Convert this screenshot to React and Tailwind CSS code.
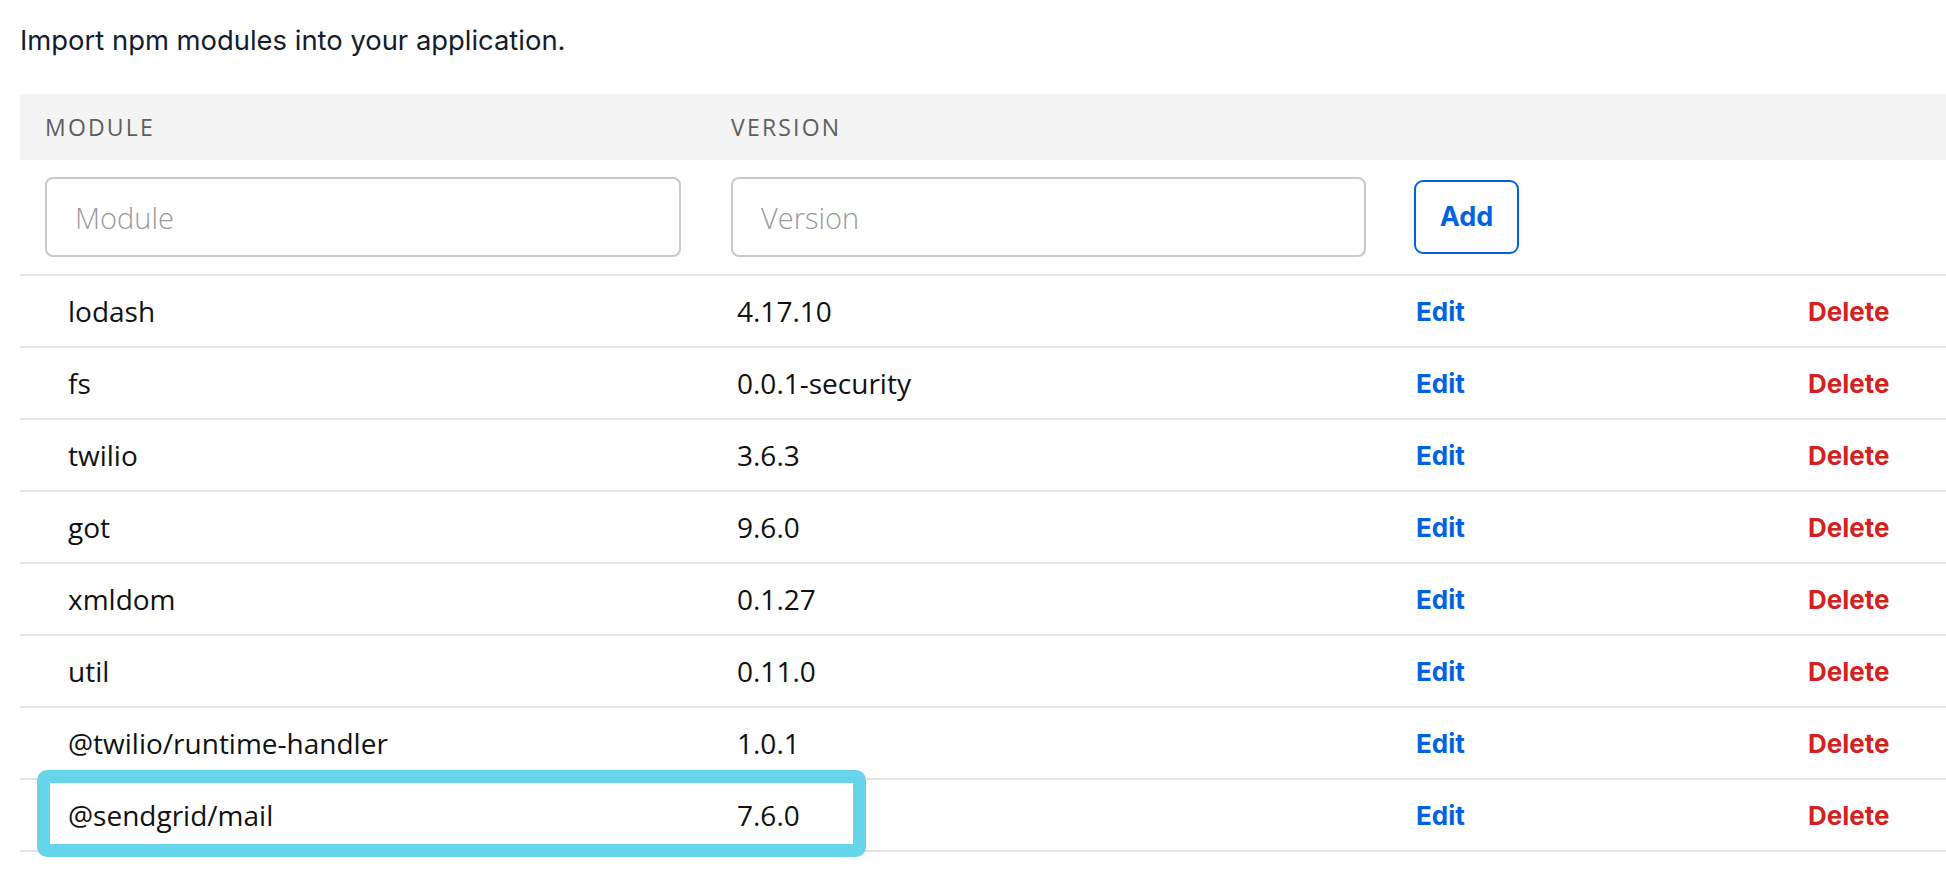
const modules = [
  { name: "lodash", version: "4.17.10" },
  { name: "fs", version: "0.0.1-security" },
  { name: "twilio", version: "3.6.3" },
  { name: "got", version: "9.6.0" },
  { name: "xmldom", version: "0.1.27" },
  { name: "util", version: "0.11.0" },
  { name: "@twilio/runtime-handler", version: "1.0.1" },
  { name: "@sendgrid/mail", version: "7.6.0", highlight: true },
];

const cols = "grid grid-cols-[686px_685px_392px_1fr]";

export default function App() {
  return (
    <div className="min-h-screen bg-white pl-[20px] pt-[19px] font-['Open_Sans',sans-serif]">
      <p className="font-['Inter',sans-serif] text-[27.4px] leading-[42px] text-[#121c2d]">
        Import npm modules into your application.
      </p>

      <div className="mt-[33px]">
        {/* header */}
        <div className={`${cols} h-[66px] items-center bg-[#f4f4f4]`}>
          <div className="pl-[25px] text-[23px] tracking-[2.2px] text-[#5e5e5e]">
            MODULE
          </div>
          <div className="pl-[25px] text-[23px] tracking-[2.2px] text-[#5e5e5e]">
            VERSION
          </div>
          <div />
          <div />
        </div>

        {/* add form */}
        <div className={`${cols} items-center border-b-2 border-[#e3e3e3] py-[17px]`}>
          <div className="px-[25px]">
            <input
              placeholder="Module"
              className="h-[80px] w-full rounded-[8px] border-2 border-[#c9c9c9] px-[28px] text-[29px] font-light text-[#121c2d] placeholder:text-[#9b9b9b] focus:outline-none"
            />
          </div>
          <div className="px-[25px]">
            <input
              placeholder="Version"
              className="h-[80px] w-full rounded-[8px] border-2 border-[#c9c9c9] px-[28px] text-[29px] font-light text-[#121c2d] placeholder:text-[#9b9b9b] focus:outline-none"
            />
          </div>
          <div className="pl-[23px]">
            <button className="h-[74px] w-[105px] rounded-[9px] border-2 border-[#0263e0] font-['Inter',sans-serif] text-[27px] font-bold text-[#0263e0]">
              Add
            </button>
          </div>
          <div />
        </div>

        {/* rows */}
        {modules.map((m) => (
          <div
            key={m.name}
            className={`${cols} relative h-[72px] items-center border-b-2 border-[#e3e3e3]`}
          >
            <div className="pl-[48px] text-[28px] text-[#111]">{m.name}</div>
            <div className="pl-[31px] text-[28px] text-[#111]">{m.version}</div>
            <div className="pl-[25px]">
              <button className="font-['Inter',sans-serif] text-[26px] font-bold text-[#0263e0]">
                Edit
              </button>
            </div>
            <div className="pl-[25px]">
              <button className="font-['Inter',sans-serif] text-[26px] font-bold text-[#d61f1f]">
                Delete
              </button>
            </div>
            {m.highlight && (
              <div className="pointer-events-none absolute left-[17px] top-[-10px] h-[87px] w-[829px] rounded-[10px] border-[13px] border-[#66d5ec]" />
            )}
          </div>
        ))}
      </div>
    </div>
  );
}
